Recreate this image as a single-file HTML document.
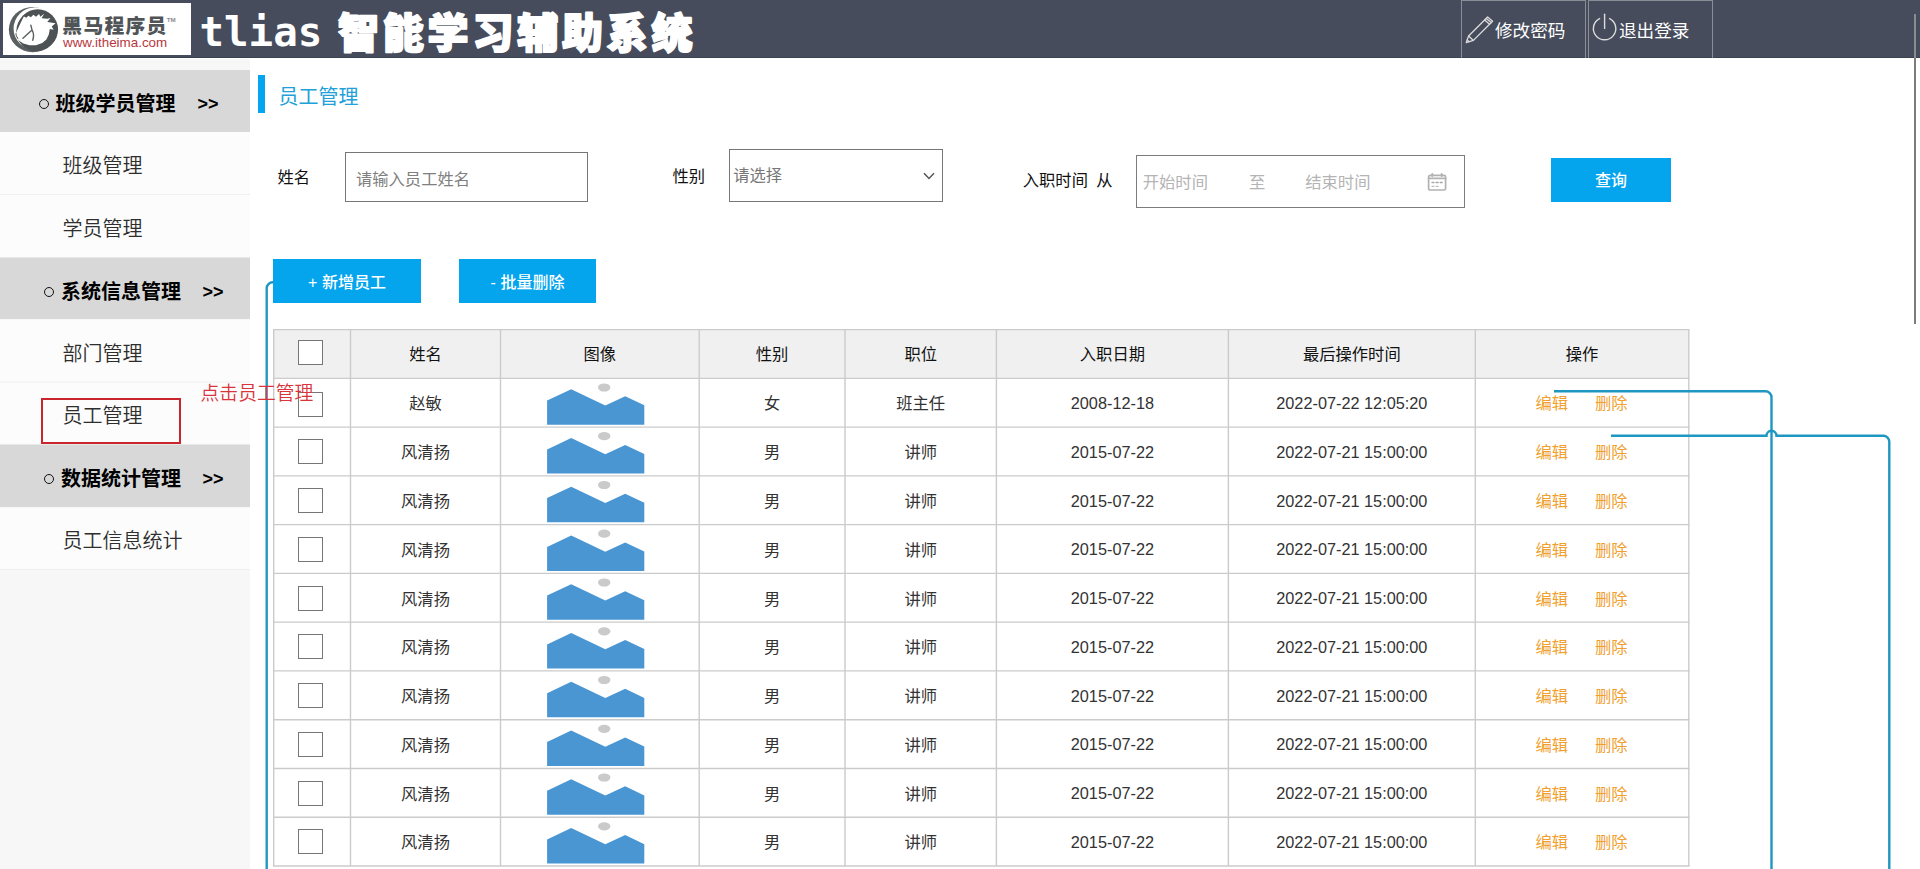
<!DOCTYPE html>
<html lang="zh-CN"><head><meta charset="utf-8"><title>tlias 智能学习辅助系统</title>
<style>
*{margin:0;padding:0;box-sizing:border-box}
html,body{width:1920px;height:869px;overflow:hidden;background:#fff}
body{position:relative;font-family:"Liberation Sans","Noto Sans CJK SC",sans-serif;color:#222;font-size:16px}
.a{position:absolute;white-space:nowrap}
.hdr{left:0;top:0;width:1920px;height:58px;background:#464c5b;border-bottom:1px solid #3c4150}
.logo{left:3px;top:3px;width:188px;height:52px;background:#fff}
.brand{left:62.3px;top:13px;font-size:19.8px;font-weight:900;color:#505456;line-height:26px;letter-spacing:1.3px}
.tm{left:166.8px;top:14.5px;font-size:6.2px;color:#8a8a8a;line-height:10px;font-weight:700}
.url{left:63px;top:35px;font-size:13.4px;color:#b8383e;line-height:16px}
.t1{left:199.5px;top:7.5px;font-family:"DejaVu Sans Mono","Liberation Mono",monospace;font-size:40.8px;font-weight:700;line-height:48px;color:#fff}
.t2{left:337.7px;top:0.5px;font-family:"Noto Sans CJK SC",sans-serif;font-weight:900;font-size:41.5px;letter-spacing:3.3px;line-height:60px;color:#fff;-webkit-text-stroke:1.4px #fff}
.hb{top:0;height:58px;border:1px solid #8a8d95;border-bottom:none}
.hbt{font-size:17.6px;color:#fff;line-height:24px;top:18.5px}
.side{left:0;top:58px;width:250px;height:811px;background:#f7f7f7}
.grp{left:0;width:250px;height:62px;background:#d8d8d8}
.itm{left:0;width:250px;background:#fcfcfc;border-bottom:1px solid #f0f0f0}
.gt{font-size:20px;font-weight:700;color:#000;line-height:28px}
.gg{font-family:"Liberation Sans",sans-serif;font-size:18px;font-weight:700;color:#000;line-height:28px}
.bul{width:10px;height:10px;border:1.3px solid #111;border-radius:50%}
.it{left:62.5px;font-size:20px;color:#2e2e2e;line-height:28px;font-weight:350}
.lab{font-size:16.3px;color:#111;line-height:22px}
.ph{font-size:16.3px;line-height:22px}
.btn{background:#05a5ee;color:#fff;text-align:center;font-size:16px;font-weight:500}
.th{font-size:16.3px;color:#111;line-height:22px;text-align:center}
.td{font-size:16.3px;color:#333;line-height:22px;text-align:center}
.op{font-size:16.3px;color:#f09f30;font-weight:400;line-height:22px}
.cb{width:25px;height:25px;border:1px solid #767676;background:#fff;left:298px}
</style></head>
<body>
<div class="a hdr"></div>
<div class="a logo"></div>
<svg class="a" style="left:3px;top:3px" width="65" height="55" viewBox="0 0 65 55"><g transform="scale(0.0633)">
<ellipse cx="470" cy="420" rx="378" ry="358" fill="#5a5f61"/>
<ellipse cx="515" cy="405" rx="348" ry="338" fill="#fff"/>
<circle cx="548" cy="420" r="322" fill="#4d5254"/>
<circle cx="528" cy="446" r="318" fill="#4d5254"/>
<path fill="#fff" d="M200 490 L230 420 L270 330 L310 250 L330 215 L370 232 L400 200 L440 226 L480 185 L520 216 L570 175 L590 216 L650 170 L610 240 L700 250 L750 235 L700 300 L830 320 L770 370 L800 422 L740 410 L722 500 L685 575 L620 632 L520 668 L420 668 L320 640 L250 592 L212 545 Z"/>
<path fill="none" stroke="#5a5f61" stroke-width="22" stroke-linecap="round" d="M440 352 L458 425 L315 558 M458 425 Q500 500 470 588"/>
<path fill="none" stroke="#5a5f61" stroke-width="16" stroke-linecap="round" d="M205 480 Q200 520 235 560"/>
</g></svg>
<div class="a brand">黑马程序员</div>
<div class="a tm">TM</div>
<div class="a url">www.itheima.com</div>
<div class="a t1">tlias</div>
<svg class="a" style="left:0;top:0" width="760" height="58" viewBox="0 0 760 58"><text x="338" y="47.8" font-family="Noto Sans CJK SC, sans-serif" font-weight="900" font-size="41" letter-spacing="3.8" fill="#fff" stroke="#fff" stroke-width="2" stroke-linejoin="round">智能学习辅助系统</text></svg>
<div class="a hb" style="left:1461px;width:125px"></div>
<div class="a hb" style="left:1588px;width:125px"></div>
<svg class="a" style="left:1464px;top:14px" width="32" height="32" viewBox="0 0 32 32" fill="none" stroke="#dcdcdc" stroke-width="1.3" stroke-linejoin="round" stroke-linecap="round">
<path d="M2.2 28.6 L4.6 22 L23.6 3 L28.6 7.2 L9.4 26.4 Z"/><path d="M4.6 22 L9.4 26.4"/><path d="M20.6 6 L25.6 10.2"/><path d="M22.2 4.4 L27.2 8.6"/><path d="M3.2 26 L5 27.6"/></svg>
<div class="a hbt" style="left:1495px">修改密码</div>
<svg class="a" style="left:1590px;top:11.5px" width="30" height="32" viewBox="0 0 30 32" fill="none" stroke="#dcdcdc" stroke-width="1.4" stroke-linecap="round">
<path d="M14.6 2.2 V16.4"/><path d="M9.6 6.6 A11.2 11.2 0 1 0 19.6 6.6"/></svg>
<div class="a hbt" style="left:1619px">退出登录</div>
<div class="a" style="left:1914px;top:14px;width:2px;height:44px;background:#8b8c92"></div>
<div class="a" style="left:1914px;top:58px;width:2px;height:266px;background:#7c7c7c"></div>
<svg class="a" style="left:0;top:0" width="250" height="869" viewBox="0 0 250 869">
<rect x="0" y="59" width="250" height="810" fill="#f7f7f7"/>
<rect x="0" y="132" width="250" height="125.5" fill="#fcfcfc"/><rect x="0" y="319" width="250" height="125.5" fill="#fcfcfc"/><rect x="0" y="507" width="250" height="62" fill="#fcfcfc"/>
<rect x="0" y="70" width="250" height="62" fill="#d8d8d8"/><rect x="0" y="257.5" width="250" height="61.6" fill="#d8d8d8"/><rect x="0" y="444.5" width="250" height="62.6" fill="#d8d8d8"/>
<rect x="0" y="194" width="250" height="1" fill="#f0f0f0"/><rect x="0" y="381.5" width="250" height="1" fill="#f0f0f0"/><rect x="0" y="569" width="250" height="1" fill="#eeeeee"/>
</svg>
<div class="a bul" style="left:38.5px;top:98.5px"></div>
<div class="a gt" style="left:55.5px;top:90px">班级学员管理</div>
<div class="a gg" style="left:197.5px;top:89.8px">&gt;&gt;</div>
<div class="a bul" style="left:44px;top:286.5px"></div>
<div class="a gt" style="left:61px;top:278px">系统信息管理</div>
<div class="a gg" style="left:202.5px;top:277.8px">&gt;&gt;</div>
<div class="a bul" style="left:44px;top:473.5px"></div>
<div class="a gt" style="left:61px;top:465px">数据统计管理</div>
<div class="a gg" style="left:202.5px;top:464.8px">&gt;&gt;</div>
<div class="a it" style="top:152px">班级管理</div>
<div class="a it" style="top:215px">学员管理</div>
<div class="a it" style="top:340px">部门管理</div>
<div class="a it" style="top:402px">员工管理</div>
<div class="a it" style="top:527px">员工信息统计</div>
<div class="a" style="left:41px;top:398px;width:140px;height:46px;border:2px solid #c9252d"></div>
<div class="a" style="left:258px;top:75px;width:7px;height:38px;background:#04a6ef"></div>
<div class="a" style="left:278.5px;top:82.8px;font-size:20px;line-height:28px;color:#239fd9">员工管理</div>
<div class="a lab" style="left:277.5px;top:166px">姓名</div>
<div class="a" style="left:345px;top:152px;width:243px;height:50px;border:1px solid #767676"></div>
<div class="a ph" style="left:356px;top:168px;color:#808080">请输入员工姓名</div>
<div class="a lab" style="left:672.5px;top:165px">性别</div>
<div class="a" style="left:729px;top:149px;width:214px;height:53px;border:1px solid #767676"></div>
<div class="a ph" style="left:733.2px;top:164.4px;color:#777">请选择</div>
<svg class="a" style="left:922px;top:170px" width="14" height="12" viewBox="0 0 14 12" fill="none" stroke="#555" stroke-width="1.5"><path d="M2 3.2 L7 8.4 L12 3.2"/></svg>
<div class="a lab" style="left:1022.8px;top:169.4px">入职时间</div>
<div class="a lab" style="left:1096.2px;top:169.4px">从</div>
<div class="a" style="left:1136px;top:155px;width:329px;height:53px;border:1.5px solid #7c7c7c"></div>
<div class="a ph" style="left:1142.8px;top:171.4px;color:#b4b4b4">开始时间</div>
<div class="a ph" style="left:1249px;top:171.4px;color:#b4b4b4">至</div>
<div class="a ph" style="left:1305.3px;top:171.4px;color:#b4b4b4">结束时间</div>
<svg class="a" style="left:1426px;top:171px" width="22" height="21" viewBox="0 0 22 21" fill="none" stroke="#b2b2b2" stroke-width="1.5" stroke-linecap="round">
<rect x="2.6" y="4.4" width="17" height="14.6" rx="1.6" stroke-width="1.7"/><path d="M2.6 7.3 H19.6" stroke-width="1.7"/><path d="M6.3 2.9 V5" stroke-width="2"/><path d="M15.7 2.9 V5" stroke-width="2"/>
<path d="M6 11.5 H8 M10 11.5 H12.2 M14.2 11.5 H16.2" stroke-width="1.3" stroke="#a8a8a8"/><path d="M6 15.3 H8 M10 15.3 H12.2" stroke-width="1.2" stroke="#bdbdbd"/></svg>
<div class="a btn" style="left:1551px;top:158px;width:120px;height:44px;line-height:45px">查询</div>
<div class="a btn" style="left:273px;top:259px;width:148px;height:44px;line-height:47px">+ 新增员工</div>
<div class="a btn" style="left:459px;top:259px;width:137px;height:44px;line-height:47px">- 批量删除</div>
<svg class="a" style="left:0;top:0" width="1920" height="869" viewBox="0 0 1920 869">
<rect x="273.7" y="329.6" width="1415.1" height="48.76" fill="#f0f0f0"/>
<g stroke="#cbcbcb" stroke-width="1.4" fill="none">
<path d="M273.0 329.60 H1689.5"/>
<path d="M273.0 378.36 H1689.5"/>
<path d="M273.0 427.12 H1689.5"/>
<path d="M273.0 475.88 H1689.5"/>
<path d="M273.0 524.64 H1689.5"/>
<path d="M273.0 573.40 H1689.5"/>
<path d="M273.0 622.16 H1689.5"/>
<path d="M273.0 670.92 H1689.5"/>
<path d="M273.0 719.68 H1689.5"/>
<path d="M273.0 768.44 H1689.5"/>
<path d="M273.0 817.20 H1689.5"/>
<path d="M273.0 865.96 H1689.5"/>
<path d="M273.7 329.6 V865.96"/>
<path d="M350.5 329.6 V865.96"/>
<path d="M500.5 329.6 V865.96"/>
<path d="M699.2 329.6 V865.96"/>
<path d="M845 329.6 V865.96"/>
<path d="M996.4 329.6 V865.96"/>
<path d="M1228.4 329.6 V865.96"/>
<path d="M1475.3 329.6 V865.96"/>
<path d="M1688.8 329.6 V865.96"/>
</g>
<polygon points="547.1,424.8 547.1,400.6 571.2,389.2 605.3,405.5 625.2,396.3 644.3,405.3 644.3,424.8" fill="#4a96d3"/>
<ellipse cx="604.2" cy="387.5" rx="6.2" ry="4.1" fill="#cacaca"/>
<polygon points="547.1,473.5 547.1,449.4 571.2,438.0 605.3,454.2 625.2,445.0 644.3,454.1 644.3,473.5" fill="#4a96d3"/>
<ellipse cx="604.2" cy="436.2" rx="6.2" ry="4.1" fill="#cacaca"/>
<polygon points="547.1,522.3 547.1,498.1 571.2,486.7 605.3,503.0 625.2,493.8 644.3,502.8 644.3,522.3" fill="#4a96d3"/>
<ellipse cx="604.2" cy="485.0" rx="6.2" ry="4.1" fill="#cacaca"/>
<polygon points="547.1,571.0 547.1,546.9 571.2,535.5 605.3,551.7 625.2,542.5 644.3,551.6 644.3,571.0" fill="#4a96d3"/>
<ellipse cx="604.2" cy="533.7" rx="6.2" ry="4.1" fill="#cacaca"/>
<polygon points="547.1,619.8 547.1,595.6 571.2,584.3 605.3,600.5 625.2,591.3 644.3,600.3 644.3,619.8" fill="#4a96d3"/>
<ellipse cx="604.2" cy="582.5" rx="6.2" ry="4.1" fill="#cacaca"/>
<polygon points="547.1,668.6 547.1,644.4 571.2,633.0 605.3,649.3 625.2,640.1 644.3,649.1 644.3,668.6" fill="#4a96d3"/>
<ellipse cx="604.2" cy="631.3" rx="6.2" ry="4.1" fill="#cacaca"/>
<polygon points="547.1,717.3 547.1,693.2 571.2,681.8 605.3,698.0 625.2,688.8 644.3,697.9 644.3,717.3" fill="#4a96d3"/>
<ellipse cx="604.2" cy="680.0" rx="6.2" ry="4.1" fill="#cacaca"/>
<polygon points="547.1,766.1 547.1,741.9 571.2,730.5 605.3,746.8 625.2,737.6 644.3,746.6 644.3,766.1" fill="#4a96d3"/>
<ellipse cx="604.2" cy="728.8" rx="6.2" ry="4.1" fill="#cacaca"/>
<polygon points="547.1,814.8 547.1,790.7 571.2,779.3 605.3,795.5 625.2,786.3 644.3,795.4 644.3,814.8" fill="#4a96d3"/>
<ellipse cx="604.2" cy="777.5" rx="6.2" ry="4.1" fill="#cacaca"/>
<polygon points="547.1,863.6 547.1,839.5 571.2,828.1 605.3,844.3 625.2,835.1 644.3,844.2 644.3,863.6" fill="#4a96d3"/>
<ellipse cx="604.2" cy="826.3" rx="6.2" ry="4.1" fill="#cacaca"/>
</svg>
<div class="a th" style="left:350.5px;width:150.0px;top:343.3px">姓名</div>
<div class="a th" style="left:500.5px;width:198.7px;top:343.3px">图像</div>
<div class="a th" style="left:699.2px;width:145.8px;top:343.3px">性别</div>
<div class="a th" style="left:845px;width:151.4px;top:343.3px">职位</div>
<div class="a th" style="left:996.4px;width:232.0px;top:343.3px">入职日期</div>
<div class="a th" style="left:1228.4px;width:246.9px;top:343.3px">最后操作时间</div>
<div class="a th" style="left:1475.3px;width:213.5px;top:343.3px">操作</div>
<div class="a cb" style="top:339.9px"></div>
<div class="a cb" style="top:392.0px"></div>
<div class="a td" style="left:350.5px;width:150.0px;top:392.4px">赵敏</div>
<div class="a td" style="left:699.2px;width:145.8px;top:392.4px">女</div>
<div class="a td" style="left:845px;width:151.4px;top:392.4px">班主任</div>
<div class="a td" style="left:996.4px;width:232.0px;top:391.9px">2008-12-18</div>
<div class="a td" style="left:1228.4px;width:246.9px;top:391.9px">2022-07-22 12:05:20</div>
<div class="a op" style="left:1535.5px;top:392.4px">编辑</div>
<div class="a op" style="left:1595px;top:392.4px">删除</div>
<div class="a cb" style="top:439.2px"></div>
<div class="a td" style="left:350.5px;width:150.0px;top:441.2px">风清扬</div>
<div class="a td" style="left:699.2px;width:145.8px;top:441.2px">男</div>
<div class="a td" style="left:845px;width:151.4px;top:441.2px">讲师</div>
<div class="a td" style="left:996.4px;width:232.0px;top:440.7px">2015-07-22</div>
<div class="a td" style="left:1228.4px;width:246.9px;top:440.7px">2022-07-21 15:00:00</div>
<div class="a op" style="left:1535.5px;top:441.2px">编辑</div>
<div class="a op" style="left:1595px;top:441.2px">删除</div>
<div class="a cb" style="top:488.0px"></div>
<div class="a td" style="left:350.5px;width:150.0px;top:490.0px">风清扬</div>
<div class="a td" style="left:699.2px;width:145.8px;top:490.0px">男</div>
<div class="a td" style="left:845px;width:151.4px;top:490.0px">讲师</div>
<div class="a td" style="left:996.4px;width:232.0px;top:489.5px">2015-07-22</div>
<div class="a td" style="left:1228.4px;width:246.9px;top:489.5px">2022-07-21 15:00:00</div>
<div class="a op" style="left:1535.5px;top:490.0px">编辑</div>
<div class="a op" style="left:1595px;top:490.0px">删除</div>
<div class="a cb" style="top:536.7px"></div>
<div class="a td" style="left:350.5px;width:150.0px;top:538.7px">风清扬</div>
<div class="a td" style="left:699.2px;width:145.8px;top:538.7px">男</div>
<div class="a td" style="left:845px;width:151.4px;top:538.7px">讲师</div>
<div class="a td" style="left:996.4px;width:232.0px;top:538.2px">2015-07-22</div>
<div class="a td" style="left:1228.4px;width:246.9px;top:538.2px">2022-07-21 15:00:00</div>
<div class="a op" style="left:1535.5px;top:538.7px">编辑</div>
<div class="a op" style="left:1595px;top:538.7px">删除</div>
<div class="a cb" style="top:585.5px"></div>
<div class="a td" style="left:350.5px;width:150.0px;top:587.5px">风清扬</div>
<div class="a td" style="left:699.2px;width:145.8px;top:587.5px">男</div>
<div class="a td" style="left:845px;width:151.4px;top:587.5px">讲师</div>
<div class="a td" style="left:996.4px;width:232.0px;top:587.0px">2015-07-22</div>
<div class="a td" style="left:1228.4px;width:246.9px;top:587.0px">2022-07-21 15:00:00</div>
<div class="a op" style="left:1535.5px;top:587.5px">编辑</div>
<div class="a op" style="left:1595px;top:587.5px">删除</div>
<div class="a cb" style="top:634.3px"></div>
<div class="a td" style="left:350.5px;width:150.0px;top:636.2px">风清扬</div>
<div class="a td" style="left:699.2px;width:145.8px;top:636.2px">男</div>
<div class="a td" style="left:845px;width:151.4px;top:636.2px">讲师</div>
<div class="a td" style="left:996.4px;width:232.0px;top:635.7px">2015-07-22</div>
<div class="a td" style="left:1228.4px;width:246.9px;top:635.7px">2022-07-21 15:00:00</div>
<div class="a op" style="left:1535.5px;top:636.2px">编辑</div>
<div class="a op" style="left:1595px;top:636.2px">删除</div>
<div class="a cb" style="top:683.0px"></div>
<div class="a td" style="left:350.5px;width:150.0px;top:685.0px">风清扬</div>
<div class="a td" style="left:699.2px;width:145.8px;top:685.0px">男</div>
<div class="a td" style="left:845px;width:151.4px;top:685.0px">讲师</div>
<div class="a td" style="left:996.4px;width:232.0px;top:684.5px">2015-07-22</div>
<div class="a td" style="left:1228.4px;width:246.9px;top:684.5px">2022-07-21 15:00:00</div>
<div class="a op" style="left:1535.5px;top:685.0px">编辑</div>
<div class="a op" style="left:1595px;top:685.0px">删除</div>
<div class="a cb" style="top:731.8px"></div>
<div class="a td" style="left:350.5px;width:150.0px;top:733.8px">风清扬</div>
<div class="a td" style="left:699.2px;width:145.8px;top:733.8px">男</div>
<div class="a td" style="left:845px;width:151.4px;top:733.8px">讲师</div>
<div class="a td" style="left:996.4px;width:232.0px;top:733.3px">2015-07-22</div>
<div class="a td" style="left:1228.4px;width:246.9px;top:733.3px">2022-07-21 15:00:00</div>
<div class="a op" style="left:1535.5px;top:733.8px">编辑</div>
<div class="a op" style="left:1595px;top:733.8px">删除</div>
<div class="a cb" style="top:780.5px"></div>
<div class="a td" style="left:350.5px;width:150.0px;top:782.5px">风清扬</div>
<div class="a td" style="left:699.2px;width:145.8px;top:782.5px">男</div>
<div class="a td" style="left:845px;width:151.4px;top:782.5px">讲师</div>
<div class="a td" style="left:996.4px;width:232.0px;top:782.0px">2015-07-22</div>
<div class="a td" style="left:1228.4px;width:246.9px;top:782.0px">2022-07-21 15:00:00</div>
<div class="a op" style="left:1535.5px;top:782.5px">编辑</div>
<div class="a op" style="left:1595px;top:782.5px">删除</div>
<div class="a cb" style="top:829.3px"></div>
<div class="a td" style="left:350.5px;width:150.0px;top:831.3px">风清扬</div>
<div class="a td" style="left:699.2px;width:145.8px;top:831.3px">男</div>
<div class="a td" style="left:845px;width:151.4px;top:831.3px">讲师</div>
<div class="a td" style="left:996.4px;width:232.0px;top:830.8px">2015-07-22</div>
<div class="a td" style="left:1228.4px;width:246.9px;top:830.8px">2022-07-21 15:00:00</div>
<div class="a op" style="left:1535.5px;top:831.3px">编辑</div>
<div class="a op" style="left:1595px;top:831.3px">删除</div>
<svg class="a" style="left:0;top:0" width="1920" height="869" viewBox="0 0 1920 869" fill="none" stroke="#1e97c1" stroke-width="2.4">
<path d="M273.5 282.3 H272.7 A6 6 0 0 0 266.7 288.3 V870"/>
<path d="M1554 391.3 H1765.5 A6 6 0 0 1 1771.5 397.3 V870"/>
<path d="M1611 435.8 H1766.5 A5 5 0 0 1 1776.5 435.8 H1883.3 A6 6 0 0 1 1889.3 441.8 V870"/>
</svg>
<div class="a" style="left:200.6px;top:380.5px;font-size:18.8px;font-weight:350;line-height:26px;color:#d9343c">点击员工管理</div>
</body></html>
